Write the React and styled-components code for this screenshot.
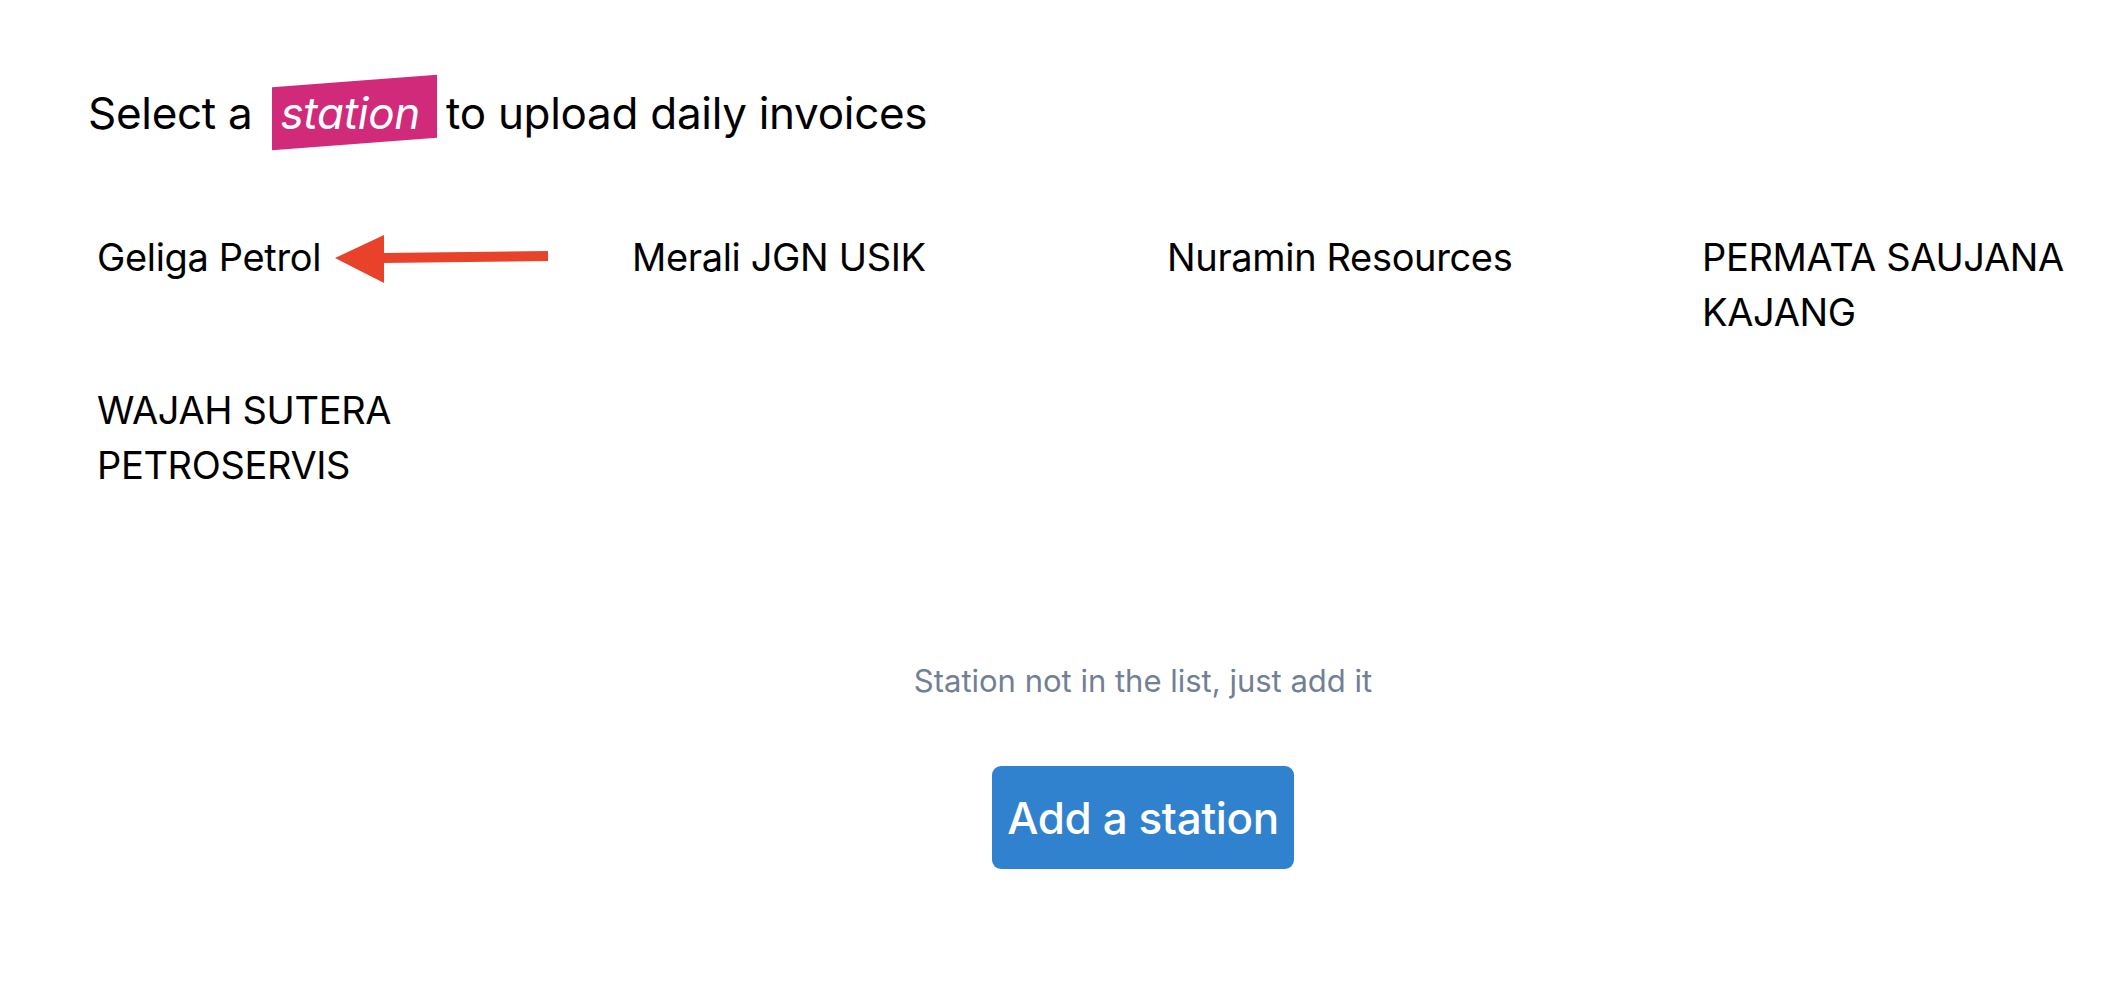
import React from "react";
import styled, { createGlobalStyle } from "styled-components";

const Global = createGlobalStyle`
  html, body { margin: 0; padding: 0; background: #ffffff; overflow: hidden; }
  body { font-family: Inter, "Noto Sans", "Liberation Sans", sans-serif; color: #000; }
`;

const Main = styled.main`
  margin-left: 88px;
  width: 2110px;
  padding-top: 86px;
  box-sizing: border-box;
`;

const Title = styled.h1`
  margin: 0;
  font-size: 44px;
  line-height: 54px;
  font-weight: 400;
  letter-spacing: -0.3px;
  display: flex;
  align-items: center;
  white-space: nowrap;
`;

const Highlight = styled.span`
  position: relative;
  display: inline-block;
  margin: 0 9px 0 20px;
  padding: 0 17px 0 8px;
  color: #fff;
  font-style: italic;
  z-index: 0;
  &::before {
    content: "";
    position: absolute;
    left: 0;
    right: 0;
    top: -5px;
    bottom: -4px;
    background: #d22a7a;
    transform: skewY(-4.3deg);
    z-index: -1;
  }
`;

const Grid = styled.ul`
  list-style: none;
  margin: 90px 0 0 9px;
  padding: 0;
  display: grid;
  grid-template-columns: repeat(4, 535px);
  row-gap: 43px;
`;

const Station = styled.li`
  position: relative;
  max-width: 440px;
  font-size: 38px;
  line-height: 55px;
  font-weight: 400;
  letter-spacing: -0.35px;
  cursor: pointer;
`;

const Arrow = styled.svg`
  position: absolute;
  left: 238px;
  top: 4px;
  width: 214px;
  height: 50px;
  overflow: visible;
`;

const Footer = styled.section`
  margin-top: 165px;
  display: flex;
  flex-direction: column;
  align-items: center;
`;

const Hint = styled.p`
  margin: 0;
  font-size: 31px;
  line-height: 46px;
  color: #718096;
  letter-spacing: 0;
`;

const AddButton = styled.button`
  margin-top: 62px;
  height: 103px;
  padding: 0 15px;
  border: none;
  border-radius: 9px;
  background: #3182ce;
  color: #fff;
  font-family: inherit;
  font-size: 44px;
  font-weight: 500;
  letter-spacing: -0.4px;
  cursor: pointer;
`;

const stations = [
  "Geliga Petrol",
  "Merali JGN USIK",
  "Nuramin Resources",
  "PERMATA SAUJANA KAJANG",
  "WAJAH SUTERA PETROSERVIS",
];

export default function App() {
  return (
    <>
      <Global />
      <Main>
        <Title>
          Select a<Highlight>station</Highlight>to upload daily invoices
        </Title>
        <Grid>
          {stations.map((s, i) => (
            <Station key={s}>
              {s}
              {i === 0 && (
                <Arrow viewBox="0 0 214 50">
                  <polygon points="0,24 49,1 49,49" fill="#e8432a" />
                  <polygon points="47,19 213,17 213,27 47,29" fill="#e8432a" />
                </Arrow>
              )}
            </Station>
          ))}
        </Grid>
        <Footer>
          <Hint>Station not in the list, just add it</Hint>
          <AddButton>Add a station</AddButton>
        </Footer>
      </Main>
    </>
  );
}
